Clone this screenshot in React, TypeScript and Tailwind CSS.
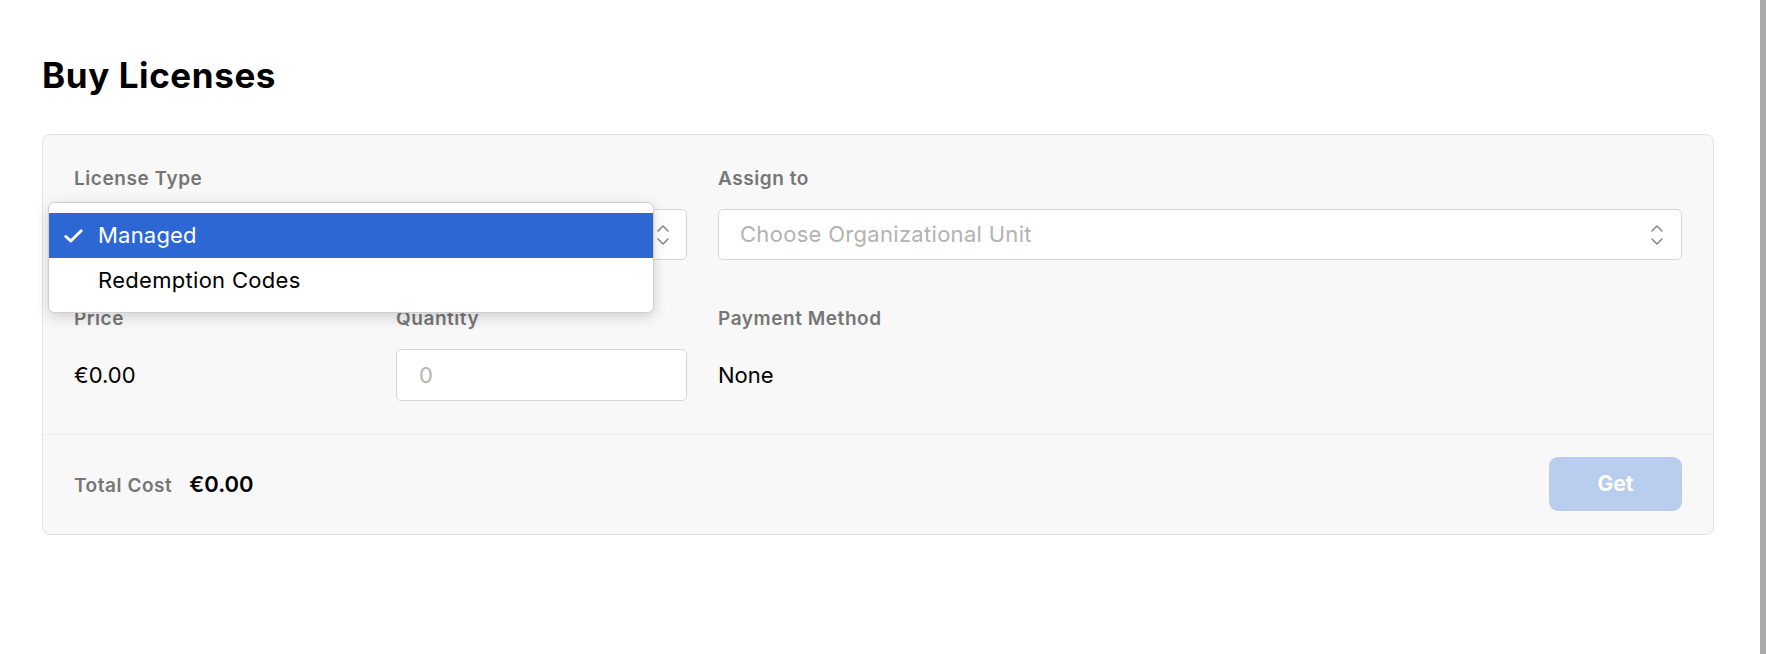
import React from "react"

const font = { fontFamily: "Inter, 'Noto Sans', sans-serif" }

function Chevrons() {
  return (
    <svg width="12" height="22" viewBox="0 0 12 22" fill="none" stroke="#8a8a8a" strokeWidth="1.6" strokeLinecap="round" strokeLinejoin="round">
      <path d="M1 7 L6 2 L11 7" />
      <path d="M1 15 L6 20 L11 15" />
    </svg>
  )
}

function CheckMark() {
  return (
    <svg width="19" height="14" viewBox="0 0 19 14" fill="none" stroke="#ffffff" strokeWidth="3" strokeLinecap="round" strokeLinejoin="round">
      <path d="M1.8 7.5 L6.8 12 L17.2 1.8" />
    </svg>
  )
}

function FieldLabel({ children }: { children: React.ReactNode }) {
  return <div className="text-[19px] leading-[24px] font-semibold text-[#767676] tracking-[0.55px]">{children}</div>
}

export default function App() {
  return (
    <div className="flex w-full h-[654px] bg-white" style={font}>
      <div className="flex-1 pl-[42px] pr-[46px] pt-[55px]">
        <h1 className="text-[35px] leading-[40px] font-bold text-black tracking-[0.6px]">Buy Licenses</h1>

        {/* Purchase card */}
        <div className="mt-[39px] border border-[#e3e3e3] rounded-[8px] bg-[#f8f8f8]">
          <div className="px-[31px] pt-[32px] pb-[33px] grid grid-cols-[291px_291px_1fr] gap-x-[31px]">
            {/* License Type */}
            <div className="col-span-2">
              <FieldLabel>License Type</FieldLabel>
              <div className="relative mt-[18px]">
                <div className="h-[51px] bg-white border border-[#d6d6d6] rounded-[5px] flex items-center justify-end pr-[17px]">
                  <Chevrons />
                </div>

                {/* Open dropdown */}
                <div className="absolute left-[-26px] top-[-7px] w-[606px] bg-white border border-[#cfcfcf] rounded-[6px] shadow-[0_4px_14px_rgba(0,0,0,0.16)] pt-[10px] pb-[9px] z-10">
                  <div className="h-[45px] bg-[#2d67d3] flex items-center text-white text-[22px] tracking-[0.2px]">
                    <div className="w-[49px] pl-[15px] flex items-center">
                      <CheckMark />
                    </div>
                    <span>Managed</span>
                  </div>
                  <div className="h-[45px] flex items-center text-black text-[22px] tracking-[0.3px] pl-[49px]">
                    Redemption Codes
                  </div>
                </div>
              </div>
            </div>

            {/* Assign to */}
            <div>
              <FieldLabel>Assign to</FieldLabel>
              <div className="mt-[18px] h-[51px] bg-white border border-[#d6d6d6] rounded-[5px] flex items-center justify-between pl-[21px] pr-[18px]">
                <span className="text-[22px] text-[#b3b3b3] tracking-[0.3px]">Choose Organizational Unit</span>
                <Chevrons />
              </div>
            </div>

            {/* Price */}
            <div className="mt-[47px]">
              <FieldLabel>Price</FieldLabel>
              <div className="mt-[18px] h-[52px] flex items-center text-[22px] text-black">€0.00</div>
            </div>

            {/* Quantity */}
            <div className="mt-[47px]">
              <FieldLabel>Quantity</FieldLabel>
              <div className="mt-[18px] h-[52px] bg-white border border-[#d6d6d6] rounded-[5px] flex items-center pl-[22px]">
                <span className="text-[22px] text-[#b3b3b3]">0</span>
              </div>
            </div>

            {/* Payment Method */}
            <div className="mt-[47px]">
              <FieldLabel>Payment Method</FieldLabel>
              <div className="mt-[18px] h-[52px] flex items-center text-[22px] text-black">None</div>
            </div>
          </div>

          {/* Footer */}
          <div className="border-t border-[#ececec] px-[31px] pt-[22px] pb-[23px] flex items-center justify-between">
            <div className="flex items-baseline gap-[17px]">
              <span className="text-[19px] font-semibold text-[#767676] tracking-[0.55px]">Total Cost</span>
              <span className="text-[22px] font-semibold text-black">€0.00</span>
            </div>
            <button className="w-[133px] h-[54px] rounded-[9px] bg-[#b9cdef] text-white text-[21px] font-bold">
              Get
            </button>
          </div>
        </div>
      </div>
      <div className="w-[6px] h-full bg-[#a9a9a9]" />
    </div>
  )
}
